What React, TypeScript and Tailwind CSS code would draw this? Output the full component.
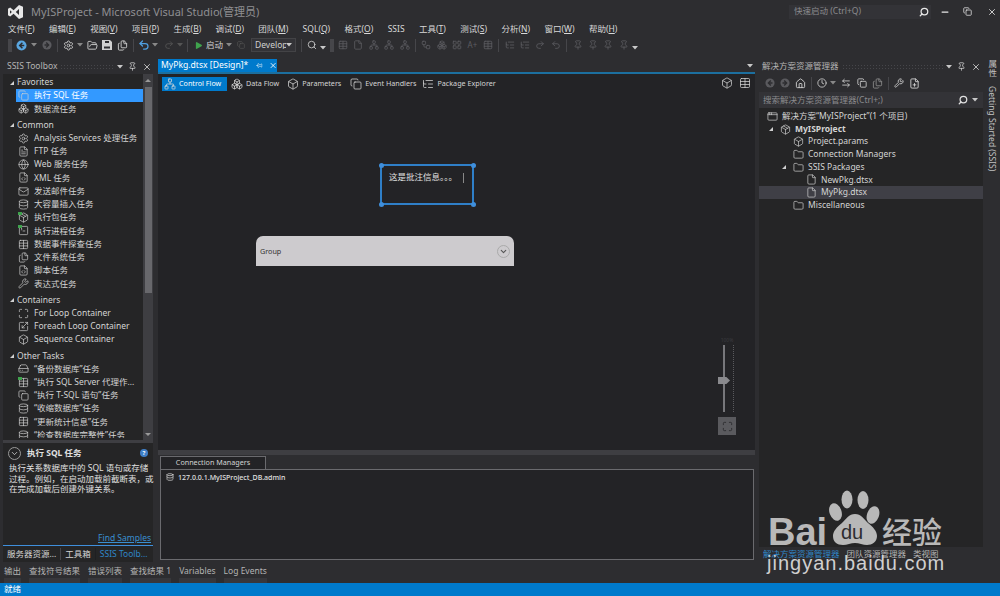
import {
  AppWindow,
  ArrowLeftRight,
  Box,
  Boxes,
  ChevronDown,
  Clock,
  Copy,
  Database,
  File,
  FileCode,
  FilePlus,
  Files,
  FileText,
  Folder,
  FolderOpen,
  Globe,
  HardDrive,
  Home,
  LayoutGrid,
  ListTree,
  Mail,
  Maximize,
  Minus,
  Network,
  Package,
  Pin,
  Play,
  Redo2,
  Scaling,
  Search,
  Settings,
  SquareTerminal,
  Table,
  Undo2,
  Workflow,
  Wrench,
  X,
} from 'lucide-react';

const Tri = () => (
  <svg width="6" height="6" viewBox="0 0 6 6" className="shrink-0">
    <path d="M5 1v4H1z" fill="#d0d0d0" />
  </svg>
);

const Caret = ({ color = '#c8c8c8' }: { color?: string }) => (
  <svg width="6" height="4" viewBox="0 0 6 4" className="shrink-0">
    <path d="M0 0h6L3 3.5z" fill={color} />
  </svg>
);

const Gripper = () => (
  <div className="w-[4px] h-[13px] shrink-0 bg-[radial-gradient(#46464a_1px,transparent_1px)] bg-[length:2px_2px]" />
);

function NavCircle({ color, dir, size = 11 }: { color: string; dir: 'l' | 'r'; size?: number }) {
  return (
    <svg width={size} height={size} viewBox="0 0 12 12" className="shrink-0">
      <circle cx="6" cy="6" r="5.5" fill={color} />
      <path
        d={dir === 'l' ? 'M7 3 4 6l3 3M4 6h5' : 'M5 3l3 3-3 3M8 6H3'}
        stroke="#2d2d30"
        strokeWidth="1.6"
        fill="none"
      />
    </svg>
  );
}

const Floppy = ({ size = 10 }: { size?: number }) => (
  <svg width={size} height={size} viewBox="0 0 10 10" className="shrink-0">
    <path d="M0 0h8l2 2v8H0z" fill="#d0d0d0" />
    <path d="M3 1h4v2H3zM2 6.5h6v2H2z" fill="#2d2d30" />
  </svg>
);

function Menu({ label, keyName }: { label: string; keyName?: string }) {
  return (
    <span className="whitespace-nowrap">
      {label}
      {keyName && (
        <>
          (<span className="underline">{keyName}</span>)
        </>
      )}
    </span>
  );
}

function ToolboxRow({
  icon: Icon,
  name,
  active,
  flag,
}: {
  icon: typeof Box;
  name: string;
  active?: boolean;
  flag?: boolean;
}) {
  return (
    <div
      className={`relative flex items-center h-[13.25px] ml-[13px] pl-[2px] gap-[5px] whitespace-nowrap ${
        active ? 'bg-[#3399ff] text-white' : ''
      }`}
    >
      <Icon size={11} strokeWidth={1.5} className="shrink-0 text-[#d0d0d0]" />
      {flag && <span className="absolute left-[2px] top-[1px] w-[4px] h-[3px] bg-[#3fa34d]" />}
      <span>{name}</span>
    </div>
  );
}

function GroupTitle({ name, className }: { name: string; className?: string }) {
  return (
    <div className={`flex items-center h-[13px] pl-[6px] gap-[2px] ${className ?? ''}`}>
      <Tri />
      <span>{name}</span>
    </div>
  );
}

function DesignTab({
  icon: Icon,
  name,
  active,
  className,
}: {
  icon: typeof Box;
  name: string;
  active?: boolean;
  className?: string;
}) {
  return (
    <div
      className={`flex items-center h-[14px] gap-[3px] whitespace-nowrap ${className ?? ''} ${
        active ? 'bg-[#007acc] text-white px-[2px] w-[65px]' : ''
      }`}
    >
      <Icon size={12} strokeWidth={1.5} className="shrink-0 text-[#d8d8d8]" />
      <span className="text-[7.2px]">{name}</span>
    </div>
  );
}

function Handle({ className }: { className: string }) {
  return <div className={`absolute w-[5px] h-[5px] rounded-full bg-[#3f8fdc] ${className}`} />;
}

function TreeRow({
  icon: Icon,
  name,
  indent,
  tri,
  bold,
  active,
}: {
  icon: typeof Box;
  name: string;
  indent: string;
  tri?: string;
  bold?: boolean;
  active?: boolean;
}) {
  return (
    <div
      className={`relative flex items-center h-[12.7px] gap-[4px] whitespace-nowrap ${indent} ${
        active ? 'bg-[#3f3f46]' : ''
      } ${bold ? 'font-bold' : ''}`}
    >
      {tri && (
        <span className={`absolute top-[3px] flex ${tri}`}>
          <Tri />
        </span>
      )}
      <Icon size={11} strokeWidth={1.5} className="shrink-0 text-[#d0d0d0]" />
      <span>{name}</span>
    </div>
  );
}

function BottomTab({ name }: { name: string }) {
  return (
    <div className="flex flex-col h-full justify-between">
      <span className="pt-[3.5px] whitespace-nowrap">{name}</span>
      <div className="h-[5px] bg-[#37373b]" />
    </div>
  );
}

export default function App() {
  const sans = "font-['Noto_Sans','Noto_Sans_CJK_SC',sans-serif]";
  return (
    <div
      className={`relative flex flex-col w-[1000px] h-[596px] overflow-hidden bg-[#2d2d30] text-[#d4d4d4] text-[8.5px] leading-none ${sans}`}
    >
      {/* title bar */}
      <div className="flex items-center h-[21px] shrink-0 pt-[2px] pl-[8px] pr-[3px]">
        <svg width="15" height="14" viewBox="0 0 15 14" className="shrink-0">
          <path
            d="M11 0 15 1.8V12.2L11 14 5.6 8.8 2.2 11.4 0 10.2V3.8L2.2 2.6 5.6 5.2zM11 4 7.8 7l3.2 3zM2 5.2v3.6L3.9 7z"
            fill="#e8e8e8"
            fillRule="evenodd"
          />
        </svg>
        <span className="ml-[8px] text-[11px] text-[#8f8f92]">
          MyISProject - Microsoft Visual Studio(管理员)
        </span>
        <div className="ml-auto flex items-center justify-between w-[142px] h-[14px] pl-[5px] pr-[2px] mr-[9px] bg-[#333337] text-[#8b8b8e]">
          <span>快速启动 (Ctrl+Q)</span>
          <Search size={10} strokeWidth={3} className="text-[#e8e8e8] -scale-x-100" />
        </div>
        <Minus size={10} strokeWidth={3} className="text-[#e8e8e8]" />
        <Copy size={9} strokeWidth={2} className="ml-[13px] text-[#e8e8e8]" />
        <X size={10} strokeWidth={2} className="ml-[15px] text-[#e8e8e8]" />
      </div>

      {/* menu */}
      <div className="flex items-center h-[15px] pt-[1px] shrink-0 pl-[8px] gap-[14.4px] text-[#d8d8d8]">
        <Menu label="文件" keyName="F" />
        <Menu label="编辑" keyName="E" />
        <Menu label="视图" keyName="V" />
        <Menu label="项目" keyName="P" />
        <Menu label="生成" keyName="B" />
        <Menu label="调试" keyName="D" />
        <Menu label="团队" keyName="M" />
        <Menu label="SQL" keyName="Q" />
        <Menu label="格式" keyName="O" />
        <span>SSIS</span>
        <Menu label="工具" keyName="T" />
        <Menu label="测试" keyName="S" />
        <Menu label="分析" keyName="N" />
        <Menu label="窗口" keyName="W" />
        <Menu label="帮助" keyName="H" />
      </div>

      {/* toolbar */}
      <div className="flex items-center h-[18px] mb-[4px] shrink-0 pl-[8px] text-[#d0d0d0]">
        <Gripper />
        <span className="ml-[4px]"><NavCircle color="#5aa6e0" dir="l" /></span>
        <span className="ml-[4px]"><Caret color="#888" /></span>
        <span className="ml-[5px]"><NavCircle color="#5a5a5e" dir="r" size={10} /></span>
        <div className="ml-[5px] w-px h-[13px] bg-[#46464a]" />
        <Settings size={11} className="ml-[5px] text-[#c8c8c8]" />
        <span className="ml-[3px]"><Caret color="#888" /></span>
        <FolderOpen size={11} className="ml-[4px]" />
        <span className="ml-[4px]"><Floppy /></span>
        <Files size={11} className="ml-[5px]" />
        <div className="ml-[5px] w-px h-[13px] bg-[#46464a]" />
        <Undo2 size={12} strokeWidth={2.5} className="ml-[4px] text-[#4f9fe0]" />
        <span className="ml-[2px]"><Caret color="#888" /></span>
        <Redo2 size={10} className="ml-[6px] text-[#555]" />
        <span className="ml-[3px]"><Caret color="#555" /></span>
        <div className="ml-[4px] w-px h-[13px] bg-[#46464a]" />
        <Play size={9} fill="#3fa34d" strokeWidth={0} className="ml-[6px]" />
        <span className="ml-[3px]">启动</span>
        <span className="ml-[3px]"><Caret color="#888" /></span>
        <Copy size={8} className="ml-[5px] text-[#555]" />
        <div className="flex items-center justify-between ml-[6px] w-[45px] h-[14px] pl-[3px] pr-[3px] bg-[#333337] border border-[#434346]">
          <span className="w-[31px] overflow-hidden">Develop</span>
          <Caret />
        </div>
        <div className="ml-[5px] w-px h-[13px] bg-[#46464a]" />
        <Search size={10} className="ml-[5px]" />
        <span className="ml-[3px] mt-[6px]"><Caret /></span>
        <span className="ml-[4px]"><Gripper /></span>
        <div className="flex items-center ml-[4px] gap-[5.4px] text-[#5c5c60]">
          <Table size={10} />
          <File size={10} />
          <Network size={10} />
          <Network size={10} />
          <Network size={10} />
          <div className="w-px h-[13px] bg-[#46464a]" />
          <Workflow size={10} />
          <Boxes size={10} />
          <LayoutGrid size={10} />
          <span className="w-[10px] text-[8px]">A+</span>
          <Table size={10} />
          <div className="w-px h-[13px] bg-[#46464a]" />
          <ListTree size={10} />
          <ListTree size={10} />
          <Redo2 size={10} />
          <Undo2 size={10} />
          <div className="w-px h-[13px] bg-[#46464a]" />
          <Pin size={10} />
          <Pin size={10} />
          <Pin size={10} />
          <Pin size={10} />
        </div>
        <span className="ml-[3px] mt-[6px]"><Caret /></span>
      </div>

      {/* dock area */}
      <div className="flex flex-1 min-h-0 pl-[3px]">
        {/* ssis toolbox */}
        <div className="flex flex-col w-[150px] shrink-0">
          <div className="flex items-center h-[16px] pt-[1px] pl-[4px] pr-[1px] gap-[3px]">
            <span className="text-[#b4b4b4] whitespace-nowrap">SSIS Toolbox</span>
            <div className="flex-1 h-[5px] bg-[radial-gradient(#46464a_1px,transparent_1px)] bg-[length:3px_3px]" />
            <Caret />
            <Pin size={9} className="ml-[2px]" />
            <X size={10} className="ml-[2px]" />
          </div>
          <div className="flex h-[366px] bg-[#252526]">
            <div className="flex-1 min-w-0 h-[364px] overflow-hidden pt-[2px]">
              <GroupTitle name="Favorites" />
              <ToolboxRow icon={Copy} name="执行 SQL 任务" active />
              <ToolboxRow icon={Boxes} name="数据流任务" />
              <GroupTitle name="Common" className="mt-[3px]" />
              <ToolboxRow icon={Settings} name="Analysis Services 处理任务" />
              <ToolboxRow icon={FileText} name="FTP 任务" />
              <ToolboxRow icon={Globe} name="Web 服务任务" />
              <ToolboxRow icon={FileCode} name="XML 任务" />
              <ToolboxRow icon={Mail} name="发送邮件任务" />
              <ToolboxRow icon={Database} name="大容量插入任务" />
              <ToolboxRow icon={Package} name="执行包任务" flag />
              <ToolboxRow icon={SquareTerminal} name="执行进程任务" flag />
              <ToolboxRow icon={Table} name="数据事件探查任务" />
              <ToolboxRow icon={Files} name="文件系统任务" />
              <ToolboxRow icon={FileCode} name="脚本任务" />
              <ToolboxRow icon={Wrench} name="表达式任务" />
              <GroupTitle name="Containers" className="mt-[3px]" />
              <ToolboxRow icon={Maximize} name="For Loop Container" />
              <ToolboxRow icon={Scaling} name="Foreach Loop Container" />
              <ToolboxRow icon={Box} name="Sequence Container" />
              <GroupTitle name="Other Tasks" className="mt-[3px]" />
              <ToolboxRow icon={HardDrive} name="“备份数据库”任务" />
              <ToolboxRow icon={Table} name="“执行 SQL Server 代理作..." flag />
              <ToolboxRow icon={Copy} name="“执行 T-SQL 语句”任务" />
              <ToolboxRow icon={Database} name="“收缩数据库”任务" />
              <ToolboxRow icon={Table} name="“更新统计信息”任务" />
              <ToolboxRow icon={Database} name="“检查数据库完整性”任务" />
            </div>
            <div className="flex flex-col items-center w-[10px] shrink-0 bg-[#3e3e42]">
              <svg width="6" height="5" viewBox="0 0 6 5" className="mt-[4px]">
                <path d="M0 4h6L3 1z" fill="#999" />
              </svg>
              <div className="w-[7px] h-[206px] mt-[4px] bg-[#68686c]" />
              <svg width="6" height="5" viewBox="0 0 6 5" className="mt-auto mb-[3px]">
                <path d="M0 1h6L3 4z" fill="#999" />
              </svg>
            </div>
          </div>
          <div className="h-[3px] bg-[#3e3e42]" />
          <div className="flex flex-col h-[102px] bg-[#252526] pl-[6px] pr-[2px] text-[#e0e0e0]">
            <div className="flex items-center h-[16px] mt-[2px] -ml-[1px] gap-[6px] font-bold">
              <span className="flex items-center justify-center w-[13px] h-[13px] rounded-full border border-[#999]">
                <ChevronDown size={9} />
              </span>
              <span>执行 SQL 任务</span>
              <span className="flex items-center justify-center ml-auto mr-[3px] w-[8px] h-[8px] rounded-full bg-[#3f7fc8] text-[6px] text-white">
                ?
              </span>
            </div>
            <p className="mt-[2px] leading-[10.5px] whitespace-nowrap">
              执行关系数据库中的 SQL 语句或存储
              <br />
              过程。例如，在启动加载前截断表，或
              <br />
              在完成加载后创建外键关系。
            </p>
            <span className="mt-auto mb-[3px] ml-auto text-[#3a8fd0] underline">Find Samples</span>
          </div>
          <div className="h-px bg-[#3f8fdc]" />
          <div className="flex items-center h-[16px] pl-[4px] gap-[4px] bg-[#252526] whitespace-nowrap">
            <span>服务器资源...</span>
            <div className="w-px h-[12px] bg-[#46464a]" />
            <span>工具箱</span>
            <div className="w-px h-[12px] bg-[#1f1f22]" />
            <span className="text-[#2f86c8]">SSIS Toolb...</span>
          </div>
        </div>

        {/* designer */}
        <div className="flex flex-col w-[597px] shrink-0 ml-[5px]">
          <div className="flex items-end h-[14px] shrink-0 pr-[2px]">
            <div className="flex items-center w-[119px] h-[13px] pl-[3px] bg-[#007acc] text-white whitespace-nowrap">
              <span className="text-[8.6px]">MyPkg.dtsx [Design]*</span>
              <Pin size={7} className="ml-[8px] rotate-90" />
              <X size={9} strokeWidth={2.5} className="ml-[6px]" />
            </div>
            <span className="ml-auto mb-[4px]">
              <Caret />
            </span>
          </div>
          <div className="h-[2px] shrink-0 bg-[#1c6f9f]" />
          <div className="flex items-start h-[18px] shrink-0 pl-[4px] pt-[3px] bg-[#232326]">
            <DesignTab icon={Network} name="Control Flow" active />
            <DesignTab icon={Boxes} name="Data Flow" className="ml-[4px]" />
            <DesignTab icon={Box} name="Parameters" className="ml-[8px]" />
            <DesignTab icon={Copy} name="Event Handlers" className="ml-[9px]" />
            <DesignTab icon={ListTree} name="Package Explorer" className="ml-[6px]" />
            <Box size={12} strokeWidth={1.5} className="ml-auto" />
            <Table size={12} strokeWidth={1.5} className="ml-[6px] mr-[4px]" />
          </div>
          <div className="relative flex-1 min-h-0 bg-[#232326]">
            {/* annotation */}
            <div className="absolute left-[222px] top-[72px] w-[94px] h-[41px] border-2 border-[#2f7fc8] pl-[7px] pt-[7px] text-[#e0e0e0] whitespace-nowrap">
              这是批注信息。。。
              <div className="absolute right-[8px] top-[7px] w-px h-[10px] bg-[#888]" />
              <Handle className="left-[-3.5px] top-[-3.5px]" />
              <Handle className="right-[-3.5px] top-[-3.5px]" />
              <Handle className="left-[-3.5px] bottom-[-3.5px]" />
              <Handle className="right-[-3.5px] bottom-[-3.5px]" />
            </div>
            {/* group */}
            <div className="absolute left-[98px] top-[144px] flex items-center justify-between w-[258px] h-[30px] pl-[4px] pr-[4px] rounded-t-[7px] bg-[#cdcbce] text-[#333] text-[7.2px]">
              <span className="mt-[1px]">Group</span>
              <span className="flex items-center justify-center w-[13px] h-[13px] rounded-full border border-[#aaa]">
                <ChevronDown size={9} strokeWidth={3} className="text-[#555]" />
              </span>
            </div>
            {/* zoom */}
            <div className="absolute left-[560px] top-[246px] flex flex-col items-center w-[18px]">
              <span className="h-[7px] text-[5px] text-[#3c3c40]">100%</span>
              <div className="relative w-full h-[67px]">
                <div className="absolute left-[5px] top-0 w-[2px] h-[67px] bg-[#77777b]" />
                <div className="absolute right-[2px] top-0 h-[67px] border-r border-dotted border-[#5a5a5e]" />
                <div className="absolute left-0 top-[32px] w-[12px] h-[7px] bg-[#8a8a8e] [clip-path:polygon(0_0,70%_0,100%_50%,70%_100%,0_100%)]" />
              </div>
              <div className="flex items-center justify-center w-[18px] h-[18px] mt-[5px] bg-[#5a5a5e]">
                <Maximize size={11} className="text-[#2d2d30]" />
              </div>
            </div>
          </div>
          <div className="h-[5px] shrink-0 bg-[#3e3e42]" />
          <div className="flex flex-col h-[108px] shrink-0 pl-[2px] pr-[1px] pb-[3px]">
            <div className="flex items-center justify-center w-[106px] h-[13px] mt-[1px] border border-b-0 border-[#6a6a6e] bg-[#232326] text-[7.2px]">
              Connection Managers
            </div>
            <div className="flex-1 border border-[#6a6a6e] bg-[#232326] pl-[5px] pt-[3px]">
              <div className="flex items-center gap-[4px] text-[7px] font-medium text-[#e0e0e0]">
                <Database size={8} />
                <span>127.0.0.1.MyISProject_DB.admin</span>
              </div>
            </div>
          </div>
        </div>

        {/* solution explorer */}
        <div className="flex flex-col w-[224px] shrink-0 ml-[4px]">
          <div className="flex items-center h-[16px] pt-[1px] pl-[3px] pr-[2px] gap-[3px]">
            <span className="text-[#b4b4b4] whitespace-nowrap">解决方案资源管理器</span>
            <div className="flex-1 h-[5px] bg-[radial-gradient(#46464a_1px,transparent_1px)] bg-[length:3px_3px]" />
            <Caret />
            <Pin size={9} className="ml-[2px]" />
            <X size={10} className="ml-[2px]" />
          </div>
          <div className="flex items-center h-[18px] pl-[6px] text-[#d0d0d0]">
            <NavCircle color="#5a5a5e" dir="l" size={10} />
            <span className="ml-[5px]"><NavCircle color="#5a5a5e" dir="r" size={10} /></span>
            <Home size={11} className="ml-[5px]" />
            <div className="ml-[5px] w-px h-[13px] bg-[#46464a]" />
            <Clock size={10} className="ml-[5px]" />
            <span className="ml-[3px]"><Caret color="#888" /></span>
            <ArrowLeftRight size={10} className="ml-[5px]" />
            <Copy size={10} className="ml-[6px]" />
            <Files size={11} className="ml-[5px] text-[#888]" />
            <div className="ml-[5px] w-px h-[13px] bg-[#46464a]" />
            <Wrench size={10} className="ml-[5px]" />
            <FilePlus size={11} className="ml-[5px]" />
          </div>
          <div className="flex items-center h-[16px] pl-[4px] pr-[5px] bg-[#333337] text-[#8b8b8e]">
            <span>搜索解决方案资源管理器(Ctrl+;)</span>
            <Search size={10} strokeWidth={3} className="ml-auto mr-[1px] text-[#e0e0e0] -scale-x-100" />
            <span className="ml-[3px]"><Caret /></span>
          </div>
          <div className="flex-1 min-h-0 bg-[#252526] pt-[2px]">
            <TreeRow icon={AppWindow} name="解决方案“MyISProject”(1 个项目)" indent="pl-[8px]" />
            <TreeRow icon={Package} name="MyISProject" indent="pl-[21px]" tri="left-[9px]" bold />
            <TreeRow icon={Box} name="Project.params" indent="pl-[34px]" />
            <TreeRow icon={Folder} name="Connection Managers" indent="pl-[34px]" />
            <TreeRow icon={Folder} name="SSIS Packages" indent="pl-[34px]" tri="left-[22px]" />
            <TreeRow icon={File} name="NewPkg.dtsx" indent="pl-[47px]" />
            <TreeRow icon={File} name="MyPkg.dtsx" indent="pl-[47px]" active />
            <TreeRow icon={Folder} name="Miscellaneous" indent="pl-[34px]" />
          </div>
          <div className="flex items-center h-[16px] shrink-0 pb-[2px] pl-[4px] gap-[7px] text-[#b4b4b4] whitespace-nowrap">
            <span className="text-[#2f86c8]">解决方案资源管理器</span>
            <span>团队资源管理器</span>
            <span>类视图</span>
          </div>
        </div>

        {/* right rail */}
        <div className="flex flex-col items-center flex-1 pt-[2px] gap-[9px] text-[#c0c0c0]">
          <span className="[writing-mode:vertical-rl]">属性</span>
          <span className="[writing-mode:vertical-rl] whitespace-nowrap">Getting Started (SSIS)</span>
        </div>
      </div>

      {/* bottom tabs */}
      <div className="flex items-start h-[20px] shrink-0 pl-[4px] gap-[8px] text-[#b4b4b4]">
        <BottomTab name="输出" />
        <BottomTab name="查找符号结果" />
        <BottomTab name="错误列表" />
        <BottomTab name="查找结果 1" />
        <BottomTab name="Variables" />
        <BottomTab name="Log Events" />
      </div>

      {/* status */}
      <div className="flex items-center h-[13px] shrink-0 pl-[4px] bg-[#007acc] text-white">就绪</div>

      {/* watermark */}
      <div className="absolute left-[765px] top-[488px] w-[225px] h-[96px] text-[#b8b8b8] pointer-events-none">
        <svg width="54" height="58" viewBox="0 0 54 58" className="absolute left-[63px] top-[2px]">
          <ellipse cx="19" cy="9.5" rx="5.5" ry="9" fill="#b8b8b8" />
          <ellipse cx="35" cy="10" rx="5.5" ry="9" fill="#b8b8b8" />
          <ellipse cx="7.5" cy="22" rx="6" ry="9" fill="#b8b8b8" transform="rotate(-20 7.5 22)" />
          <ellipse cx="45" cy="25" rx="6" ry="9" fill="#b8b8b8" transform="rotate(20 45 25)" />
          <path
            d="M27 24c6 0 9 5 13 9 5 4 9 8 9 13 0 6-5 9-10 9-4 0-8-2-12-2s-8 2-12 2c-6 0-10-3-10-9 0-5 4-9 9-13 4-4 7-9 13-9z"
            fill="#b8b8b8"
          />
        </svg>
        <span className="absolute left-[3px] top-[25px] text-[38px] font-bold leading-none font-['Liberation_Sans',sans-serif]">
          Bai
        </span>
        <span className="absolute left-[76px] top-[34px] text-[20px] leading-none text-[#2d2d30] font-['Liberation_Sans',sans-serif]">
          du
        </span>
        <span className="absolute left-[117px] top-[27px] text-[30px] font-medium leading-none font-['Noto_Sans_CJK_SC',sans-serif]">
          经验
        </span>
        <span className="absolute left-[2px] top-[65px] text-[20px] leading-none tracking-[1px] text-[#d0d0d0] font-['Liberation_Sans',sans-serif]">
          jingyan.baidu.com
        </span>
      </div>
    </div>
  );
}
